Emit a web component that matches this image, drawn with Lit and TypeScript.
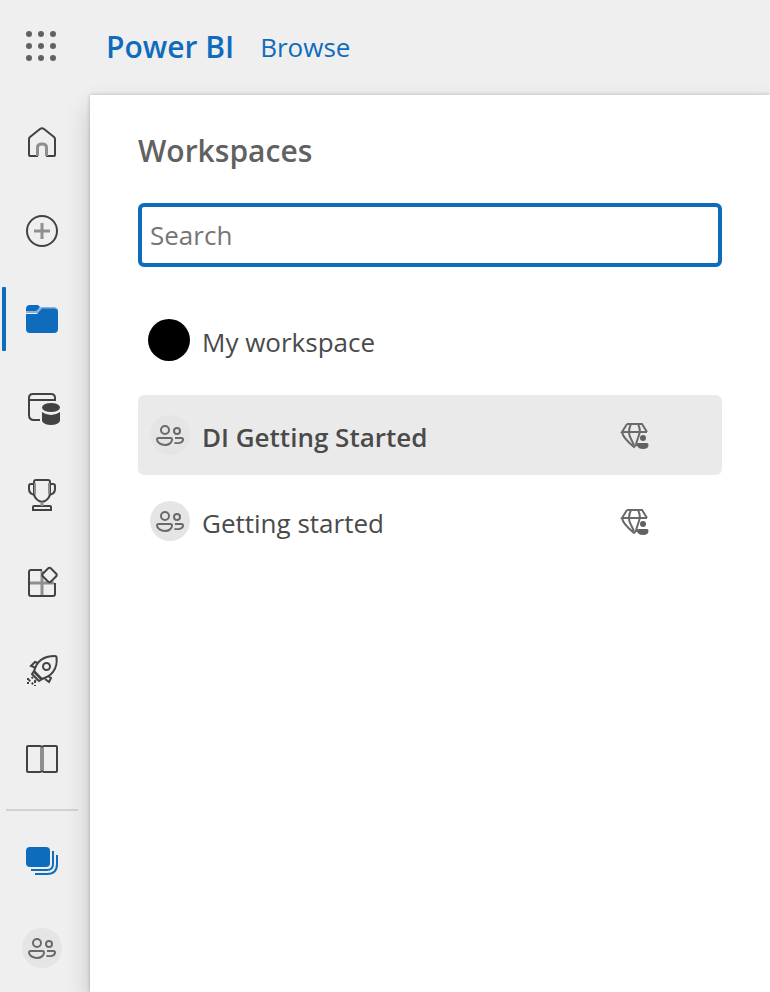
import { LitElement, html, css, svg, nothing } from "lit";
import type { SVGTemplateResult } from "lit";
import { customElement, property } from "lit/decorators.js";
import { classMap } from "lit/directives/class-map.js";

const people = svg`
  <circle cx="15" cy="15" r="4"/><circle cx="27" cy="16" r="3"/>
  <path d="M8.500 23h12q1.500 0 1.500 1.500c0 3-3 5.500-7 5.500s-8-2.500-8-5.500q0-1.500 1.500-1.500z"/>
  <path d="M25 23h6.500q1.500 0 1.500 1.500c0 3-3.500 4-8.500 3.500"/>`;

const icons: Record<string, SVGTemplateResult> = {
  home: svg`<path d="M16 33H8q-1 0-1-1V16q0-1 1-2L18 6q2-1.600 4 0l10 8q1 1 1 2v16q0 1-1 1h-8"/>
    <path class="pale thick" d="M15.500 33v-8.500q0-3.500 4.500-3.500t4.500 3.500V33"/>`,
  create: svg`<circle cx="20" cy="20" r="15"/><path class="pale thick" d="M20 12v16M12 20h16"/>`,
  workspaces: svg`<path class="solid" d="M4 10q0-4 4-4h8l2 2-3 4H4z"/>
    <path class="tint" d="M4 12h10l5-4h14l3 2v4H4z"/>
    <path class="solid" d="M4 15h11l5-5.500h12q4 0 4 4V30q0 4-4 4H8q-4 0-4-4z"/>`,
  hub: svg`<path d="M18 33h-6q-5 0-5-5V11q0-4 4-4h18q4 0 4 4v2H7"/>
    <ellipse class="solid" cx="29" cy="20.500" rx="9" ry="4.500"/>
    <path class="solid" d="M20 25q4 3 9 3t9-3v9q-2 4-9 4t-9-4z"/>`,
  metrics: svg`<path d="M14 5h12q2 0 2 2v11q0 5-5 8l-3 1-3-1q-5-3-5-8V7q0-2 2-2z"/>
    <path d="M12 9H9q-2 0-2 2v3q0 5 6 6M28 9h3q2 0 2 2v3q0 5-6 6M11 35v-3q0-1 1-1h16q1 0 1 1v3z"/>
    <path class="pale" d="M13 8v11M27 8v11"/><path class="pale thick" d="M20 27v4"/>`,
  apps: svg`<path d="M20 7H9q-2 0-2 2v22q0 2 2 2h22q2 0 2-2V20"/>
    <path class="pale thick" d="M20 8v24M8 20h24"/>
    <path class="paper" d="M26 5.500q1.500-1.500 3 0L34 10.500q1.500 1.500 0 3L29 18.500q-1.500 1.500-3 0L21 13.500q-1.500-1.500 0-3z"/>`,
  deploy: svg`<path d="M12 21C14 11 21 5 33 5q1.500 0 1.500 1.500C36 18 29 26 19 28z"/>
    <circle cx="24.500" cy="15.500" r="3.500"/>
    <path d="M16 12l-3-1-4 4 5 2M26 25l3 2-2 4-4-3M12 20l8 8-3 2-7-7z"/>
    <path stroke-dasharray="2 2" d="M11 26l-5 5M14 29l-5 5M6 27v7M13 30v5"/>`,
  learn: svg`<path d="M18 7H6q-1 0-1 1v24q0 1 1 1h12l2-1 2 1h12q1 0 1-1V8q0-1-1-1H22l-2 1z"/>
    <path class="pale wide" d="M20 9v22"/>`,
  stack: svg`<rect class="solid" x="4" y="7" width="24" height="20" rx="4"/>
    <path d="M31 11v13q0 6-6 6H9M35 15v9q0 10-10 10H13"/>`,
  team: svg`<circle class="disc" cx="20" cy="20" r="20"/><g class="soft">${people}</g>`,
  premium: svg`<path class="soft" d="M20 25l-3-1M7 3h15l5 8M7 3L2 11h25M2 11q1 6 12 15l4-4M11 3q-4 8 0 15l3 6M18 3q3 6 1 11l-3 9"/>
    <circle class="solid" cx="23" cy="17" r="3"/>
    <path class="solid" d="M19 22h8q1.500 0 1.500 2 0 4-5.500 4t-5.500-4q0-2 1.500-2z"/>`,
};

@customElement("app-icon")
class AppIcon extends LitElement {
  @property() name = "home";
  @property({ type: Number }) size = 40;
  static styles = css`
    :host { display: block; flex: none; color: var(--icon, #424242); }
    svg { display: block; overflow: visible; fill: none; stroke: currentColor; stroke-width: 2; }
    .solid { fill: currentColor; stroke: none; }
    .pale { stroke: #8f8f8f; }
    .thick { stroke-width: 3; }
    .wide { stroke-width: 4; }
    .soft { stroke: #6a6a6a; }
    .tint { fill: #86b2dd; stroke: none; }
    .disc { fill: #e5e5e5; stroke: none; }
    .paper { fill: #efefef; }
  `;
  render() {
    return html`<svg width=${this.size} height=${this.size} viewBox="0 0 ${this.size} ${this.size}" aria-hidden="true">${icons[this.name]}</svg>`;
  }
}

@customElement("nav-rail")
class NavRail extends LitElement {
  static styles = css`
    :host { display: block; flex: none; width: 84px; padding: 4px 6px 0 0; }
    a { display: flex; height: 88px; align-items: center; justify-content: center; position: relative; }
    .blue { --icon: #0f6cbd; }
    .current::before {
      content: ""; position: absolute; left: 2px; top: 12px; width: 4px; height: 64px;
      border-radius: 1px; background: #0f6cbd;
    }
    hr { margin: 6px 6px 5px; border: 0; height: 2px; background: #d1d1d1; }
  `;
  item(icon: string, label: string, blue = false, current = false) {
    return html`<a href="#" class=${classMap({ blue, current })} aria-label=${label}
      aria-current=${current ? "page" : nothing}><app-icon name=${icon}></app-icon></a>`;
  }
  render() {
    return html`<nav>
      ${this.item("home", "Home")}
      ${this.item("create", "Create")}
      ${this.item("workspaces", "Workspaces", true, true)}
      ${this.item("hub", "Data hub")}
      ${this.item("metrics", "Metrics")}
      ${this.item("apps", "Apps")}
      ${this.item("deploy", "Deployment pipelines")}
      ${this.item("learn", "Learn")}
      <hr />
      ${this.item("stack", "Browse workspaces", true)}
      ${this.item("team", "DI Getting Started")}
    </nav>`;
  }
}

@customElement("workspace-row")
class WorkspaceRow extends LitElement {
  @property() label = "";
  @property({ type: Boolean }) personal = false;
  @property({ type: Boolean }) selected = false;
  static styles = css`
    :host { display: block; }
    button {
      display: flex; align-items: center; gap: 12px; width: 100%; height: 80px;
      padding: 0 74px 0 12px; border: 0; border-radius: 6px; background: none;
      color: #4a4a4a; font: 400 26px/36px "Open Sans", "Noto Sans", sans-serif; text-align: left;
    }
    .selected { background: #eaeaea; font-weight: 600; }
    .personal { padding-left: 10px; }
    .avatar { width: 42px; height: 42px; border-radius: 50%; background: #000; flex: none; }
    .label { flex: 1; padding-top: 4px; }
    .premium { --icon: #616161; }
  `;
  render() {
    return html`<button class=${classMap({ selected: this.selected, personal: this.personal })}>
      ${this.personal ? html`<span class="avatar"></span>` : html`<app-icon name="team"></app-icon>`}
      <span class="label">${this.label}</span>
      ${this.personal ? nothing : html`<app-icon class="premium" name="premium" .size=${28}></app-icon>`}
    </button>`;
  }
}

@customElement("app-root")
class AppRoot extends LitElement {
  static styles = css`
    :host {
      display: flex; flex-direction: column; min-height: 100vh; overflow: hidden;
      background: #efefef; font-family: "Open Sans", "Noto Sans", sans-serif;
    }
    header { display: flex; align-items: center; height: 94px; padding: 0 0 1px 20px; }
    .launcher { border: 0; padding: 0; background: none; width: 42px; height: 42px; display: block; }
    .launcher svg { display: block; fill: #616161; }
    header a { color: #0f6cbd; text-decoration: none; }
    .brand { margin-left: 44px; font-size: 30px; line-height: 36px; font-weight: 600; }
    .crumb { margin-left: 26px; font-size: 26px; line-height: 36px; }
    .body { display: flex; flex: 1; }
    main { flex: 1; padding: 36px 48px; background: #fff; box-shadow: 0 0 4px rgba(0,0,0,.22), 0 12px 24px rgba(0,0,0,.18); }
    h1 { margin: 0 0 32px; color: #616161; font-size: 30px; line-height: 40px; font-weight: 600; }
    input {
      display: block; box-sizing: border-box; width: 100%; height: 64px; padding: 0 8px;
      border: 4px solid #0f6cbd; border-radius: 6px; outline: 0; background: #fff;
      color: #424242; font: 400 26px "Open Sans", "Noto Sans", sans-serif;
    }
    input::placeholder { color: #757575; opacity: 1; }
    .own { margin: 33px 0 15px; }
    .shared { display: grid; gap: 6px; }
  `;
  render() {
    return html`
      <header>
        <button class="launcher" aria-label="App launcher">
          <svg width="42" height="42" viewBox="0 0 42 42">
            ${[8, 20, 32].map((y) => [9, 21, 33].map((x) => svg`<circle cx=${x} cy=${y} r="3"/>`))}
          </svg>
        </button>
        <a class="brand" href="#">Power BI</a>
        <a class="crumb" href="#">Browse</a>
      </header>
      <div class="body">
        <nav-rail></nav-rail>
        <main>
          <h1>Workspaces</h1>
          <input type="search" placeholder="Search" aria-label="Search" />
          <div class="own"><workspace-row label="My workspace" personal></workspace-row></div>
          <div class="shared">
            <workspace-row label="DI Getting Started" selected></workspace-row>
            <workspace-row label="Getting started"></workspace-row>
          </div>
        </main>
      </div>`;
  }
}
